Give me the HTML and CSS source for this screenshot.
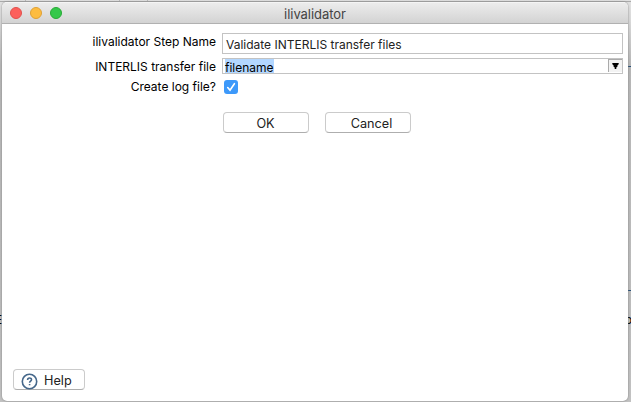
FILE: index.html
```html
<!DOCTYPE html>
<html lang="en">
<head>
<meta charset="utf-8">
<title>ilivalidator</title>
<link rel="stylesheet" href="styles.css">
</head>
<body>
<div class="desktop">
  <i class="tick t1"></i><i class="tick t2"></i><i class="tick t3"></i>
  <i class="rule r1"></i><i class="rule r2"></i>
  <span class="behind left">E</span><span class="behind right">o</span>
  <main class="window">
    <header class="titlebar">
      <div class="lights"><i class="close"></i><i class="minimize"></i><i class="maximize"></i></div>
      <h1>ilivalidator</h1>
    </header>
    <form class="content">
      <div class="row step">
        <label>ilivalidator Step Name</label>
        <div class="field text">Validate INTERLIS transfer files</div>
      </div>
      <div class="row transfer">
        <label>INTERLIS transfer file</label>
        <div class="field combo"><span class="selected">filename</span>
          <span class="arrow"><svg width="7" height="7" viewBox="0 0 7 7"><path d="M0.3 0H6.7V1.2L5.5 2.2V3.5L4.3 4.5V6H2.7V4.5L1.5 3.5V2.2L0.3 1.2Z"/></svg></span>
        </div>
      </div>
      <div class="row log">
        <label>Create log file?</label>
        <span class="check"><svg width="14" height="14" viewBox="0 0 14 14"><path d="M3.7 7.5L6 10.1L10.4 3.7"/></svg></span>
      </div>
      <div class="actions"><button type="button">OK</button><button type="button"><span class="cancel">Cancel</span></button></div>
      <footer><button type="button" class="help"><svg width="17" height="17" viewBox="0 0 17 17"><circle cx="8.5" cy="8.5" r="7.2"/><path d="M6.6 7C6.6 4.4 10.5 4.5 10.5 6.8C10.5 8.2 8.6 8.1 8.6 9.7M8.6 11V12.3"/></svg><span>Help</span></button></footer>
    </form>
  </main>
</div>
</body>
</html>
```

FILE: styles.css
```css
* { box-sizing: border-box; }
body { margin: 0; font: 13px/16px Inter, "Liberation Sans", sans-serif; color: #000; }
.desktop {
  position: relative;
  width: 631px;
  height: 402px;
  padding: 2px 3px 1px 2px;
  overflow: hidden;
  background: linear-gradient(#e2e2e2 0, #dadada 18px, #b6b6b6 65px, #bdbdbd 350px, #c2c2c2 402px);
}
.desktop::before { content: ""; position: absolute; left: 0; top: 1px; width: 631px; height: 1px; background: #aaa; }
.tick { position: absolute; top: 0; width: 1px; height: 1px; background: #bbb; }
.t1 { left: 25px; }
.t2 { left: 119px; }
.t3 { left: 147px; }
.rule { position: absolute; right: 0; width: 3px; height: 1px; background: #285078; }
.r1 { top: 66px; }
.r2 { top: 290px; }
.behind { position: absolute; top: 312px; font-size: 12px; }
.left { left: -5px; }
.right { left: 625px; }
.window {
  position: relative;
  display: flex;
  flex-direction: column;
  width: 626px;
  height: 399px;
  overflow: hidden;
  background: #fff;
  border-radius: 5px;
  box-shadow: 0 0 2px #777;
}
.titlebar {
  display: grid;
  grid-template-columns: 60px 1fr 60px;
  align-items: center;
  height: 22px;
  flex: none;
  background: linear-gradient(#ececec, #d3d3d3);
  border-top: 1px solid #f5f5f5;
  border-bottom: 1px solid #b1b1b1;
}
.lights { display: flex; gap: 8px; padding-left: 8px; }
.lights i { flex: none; width: 12px; height: 12px; border: 1px solid; border-radius: 50%; }
.lights .close { background: #fc605c; border-color: #e0504c; }
.lights .minimize { background: #fdbc40; border-color: #dea034; }
.lights .maximize { background: #34c84a; border-color: #27aa35; }
h1 { margin: 1px 0 0; font-size: 13px; font-weight: 400; text-align: center; color: #444; letter-spacing: -.05px; }
.content { display: flex; flex: 1; flex-direction: column; padding: 9px 5px 11px 11px; }
.row { display: flex; }
.row label { width: 203px; flex: none; padding-top: 1px; text-align: right; white-space: nowrap; font-size: 12px; }
.field { width: 401px; margin-left: 6px; border: 1px solid #c3c3c3; background: #fff; white-space: nowrap; }
.step { height: 25px; }
.text { height: 21px; padding: 3px 0 0 3px; font-size: 12px; color: #222; }
.transfer { height: 22px; }
.combo { display: flex; height: 16px; justify-content: space-between; padding-left: 2px; font-size: 12px; }
.selected { width: 49px; height: 14px; line-height: 17px; background: #b3d7ff; }
.arrow { display: flex; justify-content: center; width: 14px; height: 13px; padding-top: 4px; background: #f3f3f3; border-top: 1px solid #aaa; border-left: 1px solid #aaa; }
.arrow svg { margin-top: -1px; }
.check { width: 14px; height: 14px; margin-left: 8px; border-radius: 3px; background: #3d99fa; }
.check svg { display: block; fill: none; stroke: #fff; stroke-width: 1.6; stroke-linecap: round; }
.log { height: 32px; }
.log label { padding: 0; line-height: 14px; }
.actions { display: flex; gap: 16px; padding-left: 210px; }
button { width: 86px; height: 21px; padding: 2px 1px 0 0; font: inherit; font-size: 12.7px; line-height: 16px; color: #222; background: #fff; border: 1px solid #cbcbcb; border-bottom-color: #aeaeae; border-radius: 4px; }
.cancel { padding-left: 8px; }
footer { margin-top: auto; }
.help { display: flex; width: 72px; padding: 2px 0 0 7px; gap: 6px; }
.help span { padding-top: 1px; }
.help svg { flex: none; margin-top: 1px; fill: none; stroke: #45678a; stroke-width: 1.6; }
```
